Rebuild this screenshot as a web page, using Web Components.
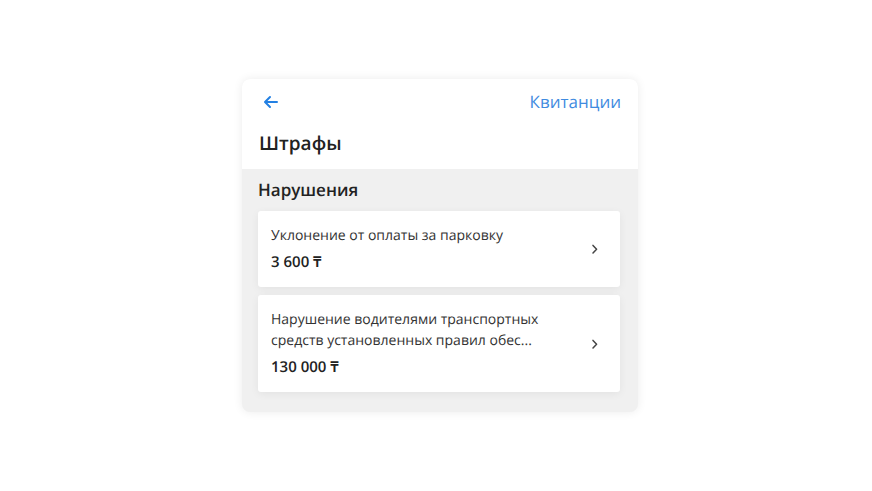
<!DOCTYPE html>
<html lang="ru">
<head>
<meta charset="utf-8">
<meta name="viewport" content="width=device-width, initial-scale=1">
<title>Штрафы</title>
<style>
	body {
		margin: 0;
		min-height: 100vh;
		display: grid;
		align-items: center;
		padding: 16px 16px 16px 24px;
		box-sizing: border-box;
		background: #fff;
		color: #222;
		font-family: "Open Sans", "Noto Sans", sans-serif;
		text-rendering: geometricPrecision;
	}
</style>
</head>
<body>

<fines-panel>
	<panel-header slot="header" heading="Штрафы">
		<a slot="action" href="#receipts">Квитанции</a>
	</panel-header>
	<fine-list heading="Нарушения">
		<fine-card href="#fine-1" amount="3 600 ₸">Уклонение от оплаты за парковку</fine-card>
		<fine-card href="#fine-2" amount="130 000 ₸">Нарушение водителями транспортных средств установленных правил обес...</fine-card>
	</fine-list>
</fines-panel>

<script>
class FinesPanel extends HTMLElement {
	constructor() {
		super()
		this.attachShadow({mode:'open'})
		this.shadowRoot.innerHTML = /*html*/`
<style>
	:host {
		display: block;
		width: 100%;
		max-width: 396px;
		margin: 0 auto;
		border-radius: 8px;
		overflow: hidden;
		background: #f0f0f0;
		box-shadow: 0 0 10px rgba(0, 0, 0, 0.08);
	}
</style>
<slot name="header"></slot>
<slot></slot>`
	}
}

class PanelHeader extends HTMLElement {
	constructor() {
		super()
		this.attachShadow({mode:'open'})
		this.shadowRoot.innerHTML = /*html*/`
<style>
	:host {
		display: block;
		padding: 11px 17px 12px;
		background: #fff;
	}
	.bar {
		display: flex;
		align-items: center;
		justify-content: space-between;
	}
	button {
		display: flex;
		padding: 4px;
		border: 0;
		background: none;
		color: #2380e3;
		cursor: pointer;
	}
	svg {
		width: 16px;
		height: 16px;
	}
	::slotted(a) {
		color: #3f8be0;
		font-size: 17px;
		line-height: 24px;
		text-decoration: none;
	}
	h1 {
		margin: 15px 0 0;
		font-size: 19px;
		font-weight: 600;
		line-height: 28px;
	}
</style>
<div class="bar">
	<button type="button" aria-label="Назад">
		<svg viewBox="0 0 16 16" fill="none" stroke="currentColor" stroke-width="2" stroke-linecap="round" stroke-linejoin="round">
			<path d="M14 8H2.4M7 3L2 8L7 13"/>
		</svg>
	</button>
	<slot name="action"></slot>
</div>
<h1></h1>`
	}

	connectedCallback() {
		this.shadowRoot.querySelector('h1').textContent = this.getAttribute('heading')
	}
}

class FineList extends HTMLElement {
	constructor() {
		super()
		this.attachShadow({mode:'open'})
		this.shadowRoot.innerHTML = /*html*/`
<style>
	:host {
		display: block;
		padding: 9px 18px 20px 16px;
	}
	h2 {
		margin: 0 0 9px;
		font-size: 17px;
		font-weight: 600;
		line-height: 24px;
	}
	.items {
		display: flex;
		flex-direction: column;
		gap: 8px;
	}
</style>
<h2></h2>
<div class="items"><slot></slot></div>`
	}

	connectedCallback() {
		this.shadowRoot.querySelector('h2').textContent = this.getAttribute('heading')
	}
}

class FineCard extends HTMLElement {
	constructor() {
		super()
		this.attachShadow({mode:'open'})
		this.shadowRoot.innerHTML = /*html*/`
<style>
	:host {
		display: block;
	}
	a {
		display: flex;
		align-items: center;
		gap: 32px;
		padding: 14px 19px 14px 13px;
		border-radius: 3px;
		background: #fff;
		box-shadow: 0 2px 8px rgba(0, 0, 0, 0.06);
		color: inherit;
		text-decoration: none;
	}
	.text {
		flex: 1;
		line-height: 21px;
	}
	.title {
		color: #333;
		font-size: 14px;
	}
	.amount {
		margin-top: 6px;
		font-size: 15px;
		font-weight: 600;
	}
	svg {
		flex: none;
		width: 12px;
		height: 12px;
	}
</style>
<a>
	<div class="text">
		<div class="title"><slot></slot></div>
		<div class="amount"></div>
	</div>
	<svg viewBox="0 0 12 12" fill="none" stroke="#444" stroke-width="1.5" stroke-linecap="round" stroke-linejoin="round" aria-hidden="true">
		<path d="M4 2.4L7.6 6.2L4 10"/>
	</svg>
</a>`
	}

	connectedCallback() {
		this.shadowRoot.querySelector('a').setAttribute('href', this.getAttribute('href'))
		this.shadowRoot.querySelector('.amount').textContent = this.getAttribute('amount')
	}
}

customElements.define('fines-panel', FinesPanel)
customElements.define('panel-header', PanelHeader)
customElements.define('fine-list', FineList)
customElements.define('fine-card', FineCard)
</script>
</body>
</html>
